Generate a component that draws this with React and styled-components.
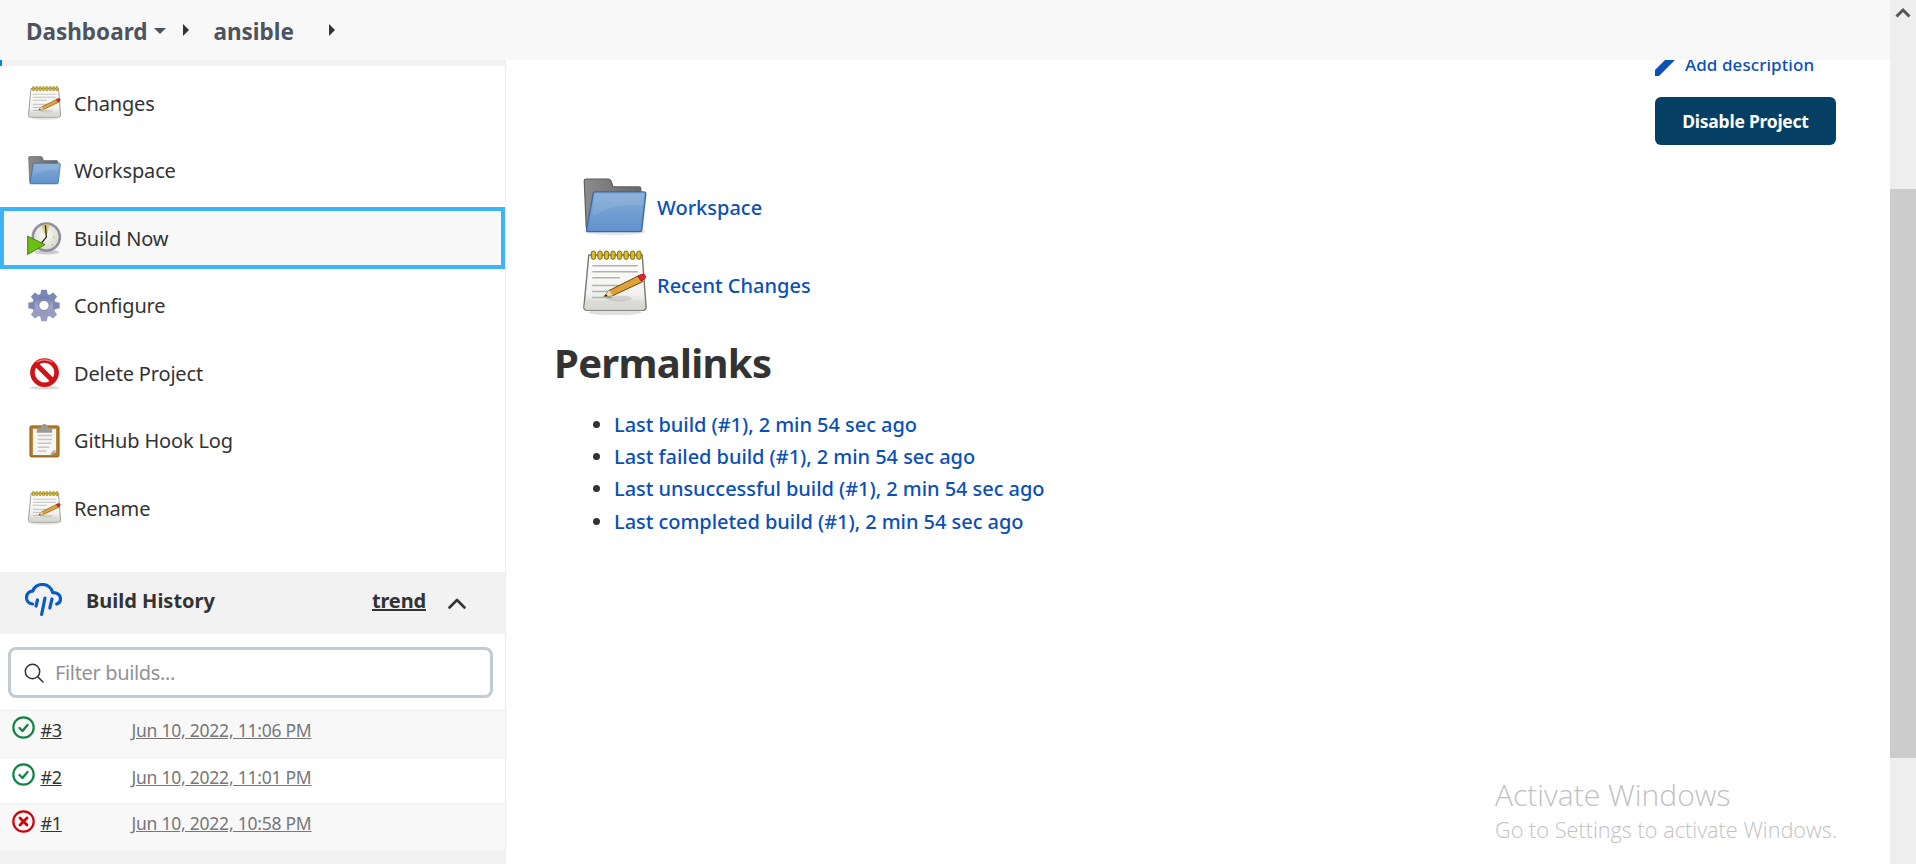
import React, { useId } from "react";
import styled, { createGlobalStyle } from "styled-components";

const GlobalStyle = createGlobalStyle`
    html, body {
        margin: 0;
        padding: 0;
        height: 100%;
        overflow: hidden;
        background: #fff;
    }
    body {
        font-family: "Noto Sans", "Open Sans", "Liberation Sans", sans-serif;
        color: #333;
    }
`;

const Page = styled.div`
    position: relative;
    display: flex;
    width: 1916px;
    height: 864px;
    overflow: hidden;
`;

const Viewport = styled.div`
    flex: 1;
    min-width: 0;
    display: flex;
    flex-direction: column;
`;

const Scrollbar = styled.div`
    width: 26px;
    flex: none;
    background: #eee;
    display: flex;
    flex-direction: column;
    align-items: center;
`;

const ScrollArrow = styled.svg`
    width: 16px;
    height: 11px;
    margin: 7px 0 0;
    flex: none;
`;

const ScrollThumb = styled.div`
    width: 100%;
    height: 569px;
    margin-top: 171px;
    background: #ccc;
`;

const Header = styled.header`
    height: 60px;
    flex: none;
    box-sizing: border-box;
    background: #f8f8f8;
    display: flex;
    align-items: center;
    padding: 3px 0 0 26px;
    position: relative;
    z-index: 2;
`;

const Crumb = styled.span`
    font-size: 22.5px;
    font-weight: 700;
    color: #4d545d;
    margin-left: ${({ $gap }) => $gap || 0}px;
`;

const Caret = styled.span`
    width: 0;
    height: 0;
    margin: -2px 0 0 7px;
    border-left: 6px solid transparent;
    border-right: 6px solid transparent;
    border-top: 6px solid #4d545d;
`;

const Arrow = styled.span`
    width: 0;
    height: 0;
    margin: -3px 0 0 ${({ $gap }) => $gap}px;
    border-top: 6px solid transparent;
    border-bottom: 6px solid transparent;
    border-left: 6px solid #333;
`;

const Body = styled.div`
    flex: 1;
    min-height: 0;
    display: flex;
`;

const Sidebar = styled.aside`
    box-sizing: border-box;
    width: 506px;
    flex: none;
    border-right: 1px solid #eee;
    display: flex;
    flex-direction: column;
`;

const TopStrip = styled.div`
    height: 6px;
    background: #f2f2f2;
    border-left: 2px solid #0a85d6;
    flex: none;
`;

const Tasks = styled.nav`
    display: flex;
    flex-direction: column;
    gap: 5.5px;
    padding-top: 6px;
    margin-bottom: 33px;
`;

const Task = styled.a`
    box-sizing: border-box;
    height: 62px;
    display: flex;
    align-items: center;
    gap: 13px;
    padding-left: 27px;
    font-size: 20px;
    color: #333;
    letter-spacing: -0.17px;
    background: ${({ $focused }) => ($focused ? "#f8f8f8" : "transparent")};
    border: ${({ $focused }) => ($focused ? "4px solid #3db4f7" : "none")};
    ${({ $focused }) => $focused && "padding-left: 23px;"}
`;

const TaskIcon = styled.span`
    width: 34px;
    height: 36px;
    flex: none;
    display: flex;
    align-items: center;
    justify-content: center;
`;

const HistoryHead = styled.div`
    box-sizing: border-box;
    height: 62px;
    flex: none;
    background: #f2f2f2;
    display: flex;
    align-items: center;
    padding: 0 0 6px 25px;
`;

const HistoryTitle = styled.span`
    font-size: 20px;
    font-weight: 700;
    margin-left: 24px;
`;

const TrendLink = styled.a`
    font-size: 20px;
    font-weight: 700;
    text-decoration: underline;
    margin-left: auto;
    letter-spacing: -0.15px;
`;

const ChevronBox = styled.span`
    display: flex;
    margin: 6px 39px 0 22px;
`;

const SearchWrap = styled.div`
    padding: 13px 12px 12px 8px;
    flex: none;
`;

const SearchBox = styled.label`
    box-sizing: border-box;
    height: 51px;
    border: 3px solid #c0cbd3;
    border-radius: 8px;
    background: #fff;
    display: flex;
    align-items: center;
    gap: 9px;
    padding-left: 13px;
`;

const SearchInput = styled.input`
    border: 0;
    outline: 0;
    flex: 1;
    min-width: 0;
    background: transparent;
    font: inherit;
    font-size: 20px;
    letter-spacing: -0.35px;
    color: #333;
    &::placeholder {
        color: #929292;
        opacity: 1;
    }
`;

const HistoryRows = styled.div`
    flex: 1;
    background: #f2f2f2;
`;

const BuildRow = styled.div`
    box-sizing: border-box;
    height: 46.7px;
    display: grid;
    grid-template-columns: 29px 91px 1fr;
    padding: 0 0 8px 11.5px;
    align-items: center;
    background: ${({ $odd }) => ($odd ? "#f8f8f8" : "#fff")};
    border-top: 1px solid #f0f0f0;
`;

const StatusIcon = styled.svg`
    width: 23px;
    height: 23px;
    margin-top: -4px;
    display: block;
`;

const BuildNum = styled.a`
    font-size: 18px;
    text-decoration: underline;
    color: #333;
    letter-spacing: -0.3px;
`;

const BuildDate = styled.a`
    font-size: 17.5px;
    text-decoration: underline;
    color: #777;
    letter-spacing: -0.24px;
`;

const Main = styled.main`
    flex: 1;
    min-width: 0;
    padding: 0 54px 0 49px;
    overflow: hidden;
`;

const Actions = styled.div`
    display: flex;
    flex-direction: column;
    align-items: flex-end;
`;

const AddDescription = styled.a`
    width: 181px;
    height: 24px;
    margin-top: -8px;
    display: flex;
    align-items: center;
    gap: 10px;
    font-size: 17px;
    font-weight: 500;
    color: #0b4fb8;
    letter-spacing: 0.08px;
`;

const PencilMark = styled.svg`
    width: 20px;
    height: 16px;
    flex: none;
    align-self: flex-start;
    margin-top: 8px;
`;

const DisableButton = styled.button`
    width: 181px;
    height: 48px;
    margin-top: 21px;
    border: 0;
    border-radius: 6px;
    background: #053f63;
    color: #fff;
    font: inherit;
    font-size: 17.5px;
    font-weight: 700;
    letter-spacing: -0.25px;
`;

const SummaryRow = styled.a`
    display: flex;
    align-items: center;
    gap: 10px;
    height: ${({ $first }) => ($first ? 62 : 70)}px;
    margin: ${({ $first }) => ($first ? "31px" : "12px")} 0 0 28px;
    font-size: 20px;
    font-weight: 500;
    color: #0b4fb8;
`;

const SummaryIcon = styled.span`
    display: flex;
    flex: none;
    margin-top: ${({ $lift }) => ($lift ? -5 : 0)}px;
`;

const Heading = styled.h1`
    margin: 15px 0 17.5px -1px;
    font-size: 40px;
    line-height: 56px;
    font-weight: 700;
    color: #333;
    letter-spacing: -0.7px;
`;

const PermaList = styled.ul`
    margin: 0;
    padding: 0 0 0 59px;
    font-size: 20px;
    line-height: 32.4px;
    color: #333;
`;

const PermaLink = styled.a`
    font-weight: 500;
    color: #0b4fb8;
    letter-spacing: -0.05px;
`;

const Watermark = styled.div`
    position: absolute;
    left: 1495px;
    top: 775px;
    color: #c1c1c1;
    font-family: "Open Sans", "Noto Sans", sans-serif;
    font-weight: 300;
`;

const WatermarkTitle = styled.div`
    font-size: 30px;
    line-height: 40px;
`;

const WatermarkText = styled.div`
    font-size: 21.7px;
    line-height: 30px;
`;

function NotepadIcon({ size }) {
    const id = useId();
    return (
        <svg width={size} height={size * 1.02} viewBox="0 0 64 66">
            <defs>
                <linearGradient id={id + "p"} x1="0" y1="0" x2="0" y2="1">
                    <stop offset="0" stopColor="#ffffff" />
                    <stop offset="0.7" stopColor="#f1f1ef" />
                    <stop offset="1" stopColor="#cfcfcb" />
                </linearGradient>
            </defs>
            <ellipse cx="32" cy="63" rx="27" ry="3" fill="#000" opacity="0.12" />
            <path d="M5 5h54l4 53q0 3-3 3H3q-3 0-3-3z" transform="translate(0.5 0)" fill={`url(#${id}p)`} stroke="#77776f" strokeWidth="1.4" />
            <path d="M2 51h60v7q0 3-3 3H4q-3 0-3-3z" fill="#d8d8d4" opacity="0.7" />
            {[8, 14.6, 21.2, 27.8, 34.4, 41, 47.6, 54].map((x) => (
                <rect key={x} x={x} y="1" width="4.4" height="8.5" rx="2.2" fill="#d8bb2c" stroke="#7d6a10" strokeWidth="1" />
            ))}
            <path d="M9 16h46M9 22h46M9 28h28M9 36h30M9 42h24M9 48h20" stroke="#b1b1ab" strokeWidth="1.5" fill="none" />
            <ellipse cx="36" cy="49" rx="13" ry="3" fill="#000" opacity="0.1" />
            <path d="M21 47l5-6 30-15 4 6-30 14z" fill="#dfa238" stroke="#6d4508" strokeWidth="1" />
            <path d="M55 26.5l3.4-1.8q3-1 4.2 1.2t-1.2 3.8l-3 1.6z" fill="#e8222c" stroke="#8a1015" strokeWidth="0.8" />
            <path d="M21 47l5-6 4 5z" fill="#f1dcae" />
            <path d="M21 47l1.8-2.2 1.9 1.8z" fill="#222" />
        </svg>
    );
}

function FolderIcon({ size }) {
    const id = useId();
    return (
        <svg width={size} height={size * 0.9} viewBox="0 0 64 58">
            <defs>
                <linearGradient id={id + "b"} x1="0" y1="0" x2="0" y2="1">
                    <stop offset="0" stopColor="#85abd6" />
                    <stop offset="1" stopColor="#5f92cd" />
                </linearGradient>
                <linearGradient id={id + "g"} x1="0" y1="0" x2="1" y2="0">
                    <stop offset="0" stopColor="#8b8b8b" />
                    <stop offset="1" stopColor="#676767" />
                </linearGradient>
            </defs>
            <ellipse cx="32" cy="54" rx="31" ry="3.4" fill="#000" opacity="0.1" />
            <path d="M1 3q0-2 2-2h22q2 0 3 2l2 6h26q2 0 2 2v40H5q-2 0-2-2z" fill={`url(#${id}g)`} stroke="#5d5d5d" strokeWidth="1.2" />
            <path d="M10 16q0-2 2-2h49q2 0 2 2l-4 36q0 2-3 2H5q-2 0-1.6-2z" fill={`url(#${id}b)`} stroke="#3a6aa6" strokeWidth="1.4" />
            <path d="M12 16h49l-1.4 12Q36 24 9 38z" fill="#fff" opacity="0.1" />
        </svg>
    );
}

function BuildIcon({ size }) {
    const id = useId();
    return (
        <svg width={size} height={size} viewBox="0 0 36 36">
            <defs>
                <radialGradient id={id + "f"} cx="0.45" cy="0.4" r="0.65">
                    <stop offset="0" stopColor="#fbfbf7" />
                    <stop offset="1" stopColor="#d6d5c8" />
                </radialGradient>
            </defs>
            <ellipse cx="21" cy="32.5" rx="13" ry="2.5" fill="#000" opacity="0.18" />
            <circle cx="20.5" cy="16.5" r="15.7" fill="#8f8da6" />
            <circle cx="20.5" cy="16.5" r="13.6" fill={`url(#${id}f)`} stroke="#6a6880" strokeWidth="0.7" />
            <path d="M20.5 16.5L15 4.5a13.6 13.6 0 0 1 9-1.2z" fill="#dcc67d" />
            <path d="M19.5 4l1 12.5-5 6" fill="none" stroke="#222" strokeWidth="1.3" />
            <circle cx="28.5" cy="16.5" r="1" fill="#b9b8ac" />
            <circle cx="27" cy="25" r="1" fill="#b9b8ac" />
            <path d="M.7 15.5L19 24.5.7 35z" fill="#6ebd12" stroke="#3f7a08" strokeWidth="1" />
        </svg>
    );
}

function GearIcon({ size }) {
    const id = useId();
    const teeth = [0, 45, 90, 135, 180, 225, 270, 315];
    return (
        <svg width={size} height={size} viewBox="0 0 36 36">
            <defs>
                <linearGradient id={id + "s"} x1="0" y1="0" x2="0" y2="1">
                    <stop offset="0" stopColor="#5f6ea6" />
                    <stop offset="0.55" stopColor="#a3a6cb" />
                    <stop offset="1" stopColor="#8a8db6" />
                </linearGradient>
            </defs>
            <circle cx="18" cy="18" r="12.5" fill={`url(#${id}s)`} />
            {teeth.map((a) => (
                <path key={a} d="M15 1.4h6l1.2 7h-8.4z" fill={a > 90 && a < 270 ? "#9a9dc2" : "#7d88b4"} transform={`rotate(${a} 18 18)`} />
            ))}
            <circle cx="18" cy="18" r="5.4" fill="#fff" stroke="#6e739c" strokeWidth="0.8" />
        </svg>
    );
}

function DeleteIcon({ size }) {
    return (
        <svg width={size} height={size} viewBox="0 0 36 36">
            <ellipse cx="18" cy="33.5" rx="16" ry="2" fill="#000" opacity="0.15" />
            <circle cx="18" cy="17" r="13.2" fill="#fff" stroke="#d01418" strokeWidth="5" />
            <path d="M9 8l18 18" stroke="#d01418" strokeWidth="5.4" />
            <path d="M9.5 5.5Q18 .8 26.5 5.5" stroke="#f58a8a" strokeWidth="1.2" fill="none" />
        </svg>
    );
}

function ClipboardIcon({ size }) {
    return (
        <svg width={size} height={size * 1.125} viewBox="0 0 32 36">
            <rect x="1" y="3" width="30" height="32" rx="1.5" fill="#b27b28" stroke="#8a5d18" />
            <path d="M4 6h24v24l-5 3H4z" fill="#f6f6f4" />
            <path d="M22 33q1-5 6-5-2 4-6 5z" fill="#a9a9a9" />
            <path d="M9 13h15M9 17h15M9 21h14M9 25h12M9 29h9" stroke="#c6c6c2" strokeWidth="1.6" />
            <path d="M8 7q0-2 2-2h2q1-4 4-4t4 4h2q2 0 2 2v3H8z" fill="#9a9a92" />
        </svg>
    );
}

function RainIcon() {
    return (
        <svg width="37" height="34" viewBox="0 0 37 34" fill="none" stroke="#0b5bc4" strokeWidth="3.2" strokeLinecap="round" strokeLinejoin="round">
            <path d="M7.5 21C3.5 20.5 1.5 17.5 1.5 14.5c0-3.6 2.8-6.4 6.2-6.4C9.3 4 13.3 1.5 17.5 1.5c5.2 0 9.4 3.6 10.2 8.2 4-.4 7.8 2 7.8 6 0 2.8-1.6 4.6-3.8 5.3" />
            <path d="M12.5 17l-1.5 6M20 15l-3.4 16.5M27 16l-2.2 9" />
        </svg>
    );
}

function SearchIcon() {
    return (
        <svg width="20" height="20" viewBox="0 0 20 20" fill="none" stroke="#333" strokeWidth="1.5" strokeLinecap="round">
            <circle cx="8.5" cy="8.5" r="7.2" />
            <path d="M14 14l5 5" />
        </svg>
    );
}

const tasks = [
    { label: "Changes", icon: <NotepadIcon size={33} /> },
    { label: "Workspace", icon: <FolderIcon size={33} /> },
    { label: "Build Now", icon: <BuildIcon size={35} />, focused: true },
    { label: "Configure", icon: <GearIcon size={35} /> },
    { label: "Delete Project", icon: <DeleteIcon size={33} /> },
    { label: "GitHub Hook Log", icon: <ClipboardIcon size={31} /> },
    { label: "Rename", icon: <NotepadIcon size={33} /> },
];

const builds = [
    { num: "#3", date: "Jun 10, 2022, 11:06 PM", ok: true },
    { num: "#2", date: "Jun 10, 2022, 11:01 PM", ok: true },
    { num: "#1", date: "Jun 10, 2022, 10:58 PM", ok: false },
];

const permalinks = [
    "Last build (#1), 2 min 54 sec ago",
    "Last failed build (#1), 2 min 54 sec ago",
    "Last unsuccessful build (#1), 2 min 54 sec ago",
    "Last completed build (#1), 2 min 54 sec ago",
];

function BuildStatus({ ok }) {
    const color = ok ? "#138347" : "#d3000c";
    return (
        <StatusIcon viewBox="0 0 23 23" fill="none" stroke={color} strokeLinecap="round" strokeLinejoin="round">
            <circle cx="11.5" cy="11.5" r="10.2" strokeWidth="2.2" />
            {ok ? (
                <path d="M7.5 12l3 3 5-6" strokeWidth="2.4" />
            ) : (
                <path d="M8 8l7 7M15 8l-7 7" strokeWidth="2.8" />
            )}
        </StatusIcon>
    );
}

export default function App() {
    return (
        <Page>
            <GlobalStyle />
            <Viewport>
                <Header>
                    <Crumb>Dashboard</Crumb>
                    <Caret />
                    <Arrow $gap={17} />
                    <Crumb $gap={24}>ansible</Crumb>
                    <Arrow $gap={35} />
                </Header>
                <Body>
                    <Sidebar>
                        <TopStrip />
                        <Tasks>
                            {tasks.map((t) => (
                                <Task key={t.label} $focused={t.focused}>
                                    <TaskIcon>{t.icon}</TaskIcon>
                                    {t.label}
                                </Task>
                            ))}
                        </Tasks>
                        <HistoryHead>
                            <RainIcon />
                            <HistoryTitle>Build History</HistoryTitle>
                            <TrendLink>trend</TrendLink>
                            <ChevronBox>
                                <svg width="18" height="11" viewBox="0 0 18 11" fill="none" stroke="#333" strokeWidth="2.6" strokeLinecap="round" strokeLinejoin="round">
                                    <path d="M1.5 9.5L9 2l7.5 7.5" />
                                </svg>
                            </ChevronBox>
                        </HistoryHead>
                        <SearchWrap>
                            <SearchBox>
                                <SearchIcon />
                                <SearchInput placeholder="Filter builds..." readOnly />
                            </SearchBox>
                        </SearchWrap>
                        <HistoryRows>
                            {builds.map((b, i) => (
                                <BuildRow key={b.num} $odd={i % 2 === 0}>
                                    <BuildStatus ok={b.ok} />
                                    <BuildNum>{b.num}</BuildNum>
                                    <BuildDate>{b.date}</BuildDate>
                                </BuildRow>
                            ))}
                        </HistoryRows>
                    </Sidebar>
                    <Main>
                        <Actions>
                            <AddDescription>
                                <PencilMark viewBox="0 0 20 16">
                                    <path d="M0 16V10L10 0H20L4 16z" fill="#0b4fb8" />
                                </PencilMark>
                                Add description
                            </AddDescription>
                            <DisableButton>Disable Project</DisableButton>
                        </Actions>
                        <SummaryRow $first>
                            <SummaryIcon>
                                <FolderIcon size={64} />
                            </SummaryIcon>
                            Workspace
                        </SummaryRow>
                        <SummaryRow>
                            <SummaryIcon $lift>
                                <NotepadIcon size={64} />
                            </SummaryIcon>
                            Recent Changes
                        </SummaryRow>
                        <Heading>Permalinks</Heading>
                        <PermaList>
                            {permalinks.map((p) => (
                                <li key={p}>
                                    <PermaLink>{p}</PermaLink>
                                </li>
                            ))}
                        </PermaList>
                    </Main>
                </Body>
            </Viewport>
            <Scrollbar>
                <ScrollArrow viewBox="0 0 16 11" fill="none" stroke="#555" strokeWidth="3">
                    <path d="M1.5 9.5L8 3l6.5 6.5" />
                </ScrollArrow>
                <ScrollThumb />
            </Scrollbar>
            <Watermark>
                <WatermarkTitle>Activate Windows</WatermarkTitle>
                <WatermarkText>Go to Settings to activate Windows.</WatermarkText>
            </Watermark>
        </Page>
    );
}
